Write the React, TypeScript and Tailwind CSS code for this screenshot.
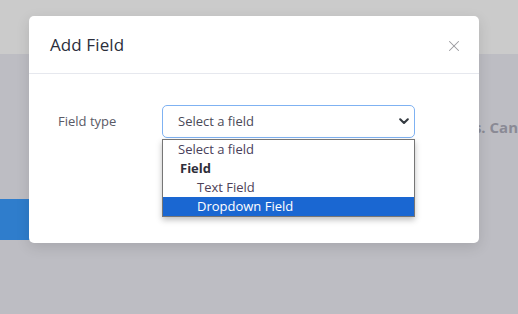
import { X } from 'lucide-react'

const font = { fontFamily: '"Open Sans", "Noto Sans", sans-serif' }

function ChevronDown() {
  return (
    <svg width="10" height="7" viewBox="0 0 10 7" className="text-[#343a40]">
      <path d="M1.2 1.3 L5 5 L8.8 1.3" fill="none" stroke="currentColor" strokeWidth="2.1" strokeLinecap="round" strokeLinejoin="round" />
    </svg>
  )
}

export default function App() {
  return (
    <div className="relative w-[518px] h-[314px] overflow-hidden font-['Open_Sans',sans-serif]">
      {/* page behind the overlay */}
      <div className="h-[54px] bg-[#cbcbcb]" />
      <div className="h-[260px] bg-[#bdbdc3] flex flex-col">
        <div className="mt-[64px] h-[18px] flex items-center justify-end whitespace-nowrap pr-0 text-[15px] font-bold text-[#8a8a95]">
          Fields. Can
        </div>
        <div className="mt-[63px] w-[120px] h-[41px] bg-[#2f7dcc]" />
      </div>

      {/* modal */}
      <div className="absolute left-[29px] top-[16px] w-[450px] h-[227px] bg-white rounded-[5px] shadow-[0_4px_14px_rgba(0,0,0,0.12)]">
        <div className="h-[58px] flex items-center justify-between pl-[21px] pr-[16px] border-b border-[#e6e8ee]">
          <h2 className="text-[17px] text-[#2b2e3b] font-medium tracking-[0.1px]">Add Field</h2>
          <X className="w-[18px] h-[18px] mt-[2px] text-[#9a9a9f]" strokeWidth={1.4} />
        </div>
        <div className="flex pt-[31px] pl-[29px]">
          <label className="w-[104px] pt-[7px] text-[13px] text-[#5a5a66]">Field type</label>
          <div className="relative">
            <div className="w-[253px] h-[33px] border border-[#7fb2f2] rounded-[5px] flex items-center justify-between pl-[15px] pr-[5px] text-[13px] text-[#4a4a58]">
              <span>Select a field</span>
              <ChevronDown />
            </div>
            <div className="absolute left-0 top-[34px] w-[253px] bg-white border border-[#767676] shadow-[0_3px_6px_rgba(0,0,0,0.25)] text-[13px] leading-[19px]" style={font}>
              <div className="pl-[15px] text-[#48405a]">Select a field</div>
              <div className="pl-[17px] font-bold text-[#2f2f3a]">Field</div>
              <div className="pl-[34px] text-[#4e4258]">Text Field</div>
              <div className="pl-[34px] bg-[#1a67d2] text-white">Dropdown Field</div>
            </div>
          </div>
        </div>
      </div>
    </div>
  )
}
